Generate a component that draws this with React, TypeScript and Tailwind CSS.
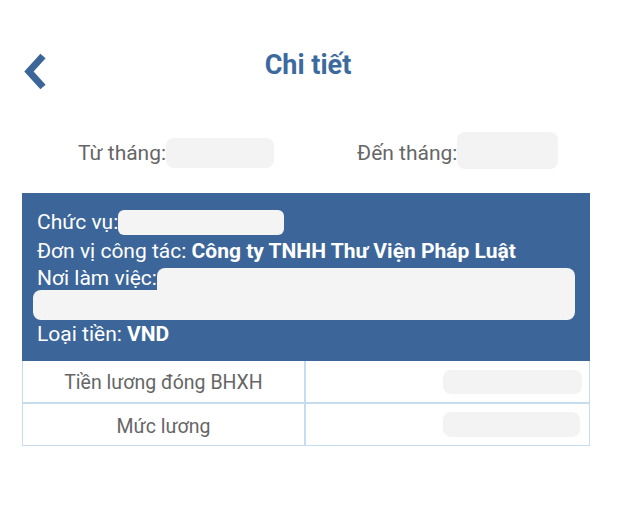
import React from "react";

export default function App() {
  return (
    <div className="w-[620px] h-[529px] bg-white overflow-hidden" style={{ fontFamily: "Roboto, 'Noto Sans', sans-serif" }}>
      <div className="relative h-[110px] flex items-start justify-center pt-[46px]">
        <svg className="absolute left-[20px] top-[51px]" width="34" height="42" viewBox="0 0 34 42">
          <polyline points="23,5 9,20.5 23,36" fill="none" stroke="#3c6699" strokeWidth="7" strokeLinejoin="miter" strokeLinecap="butt" />
        </svg>
        <h1 className="text-[27px] leading-[38px] font-bold text-[#3d6a9e] -ml-[4px]">Chi tiết</h1>
      </div>
      <div className="flex h-[83px] pt-[2px] text-[21px] text-[#666]">
        <div className="flex items-center pl-[78px]">
          <span className="pt-[2px]">Từ tháng:</span>
          <div className="w-[108px] h-[30px] rounded-lg bg-[#f3f3f3] mt-[1px]" />
        </div>
        <div className="flex items-center pl-[83px]">
          <span className="pt-[2px]">Đến tháng:</span>
          <div className="w-[101px] h-[37px] rounded-lg bg-[#f3f3f3] -mt-[4px]" />
        </div>
      </div>
      <div className="mx-[22px] w-[568px]">
        <div className="bg-[#3c6699] text-white text-[21px] leading-[29px] pl-[15px] pr-[15px] pt-[15px] h-[168px]">
          <div className="flex items-center">
            <span>Chức vụ:</span>
            <div className="w-[166px] h-[25px] rounded-md bg-[#f4f4f4]" />
          </div>
          <div>
            Đơn vị công tác: <span className="font-bold">Công ty TNHH Thư Viện Pháp Luật</span>
          </div>
          <div className="flex items-end">
            <span className="leading-[24px]">Nơi làm việc:</span>
            <div className="flex-1 h-[22px] rounded-t-lg bg-[#f4f4f4]" />
          </div>
          <div className="h-[30px] -ml-[4px] rounded-b-lg rounded-tl-lg bg-[#f4f4f4]" />
          <div>
            Loại tiền: <span className="font-bold">VND</span>
          </div>
        </div>
        <div className="border-x border-b border-[#c6ddf0] text-[19.5px] text-[#666]">
          <div className="flex h-[43px] border-b-2 border-[#c6ddf0]">
            <div className="w-[283px] flex items-center justify-center border-r-2 border-[#c6ddf0] pt-[3px]">Tiền lương đóng BHXH</div>
            <div className="flex-1 flex items-center justify-end pr-[7px]">
              <div className="w-[139px] h-[24px] rounded-lg bg-[#f3f3f3]" />
            </div>
          </div>
          <div className="flex h-[41px]">
            <div className="w-[283px] flex items-center justify-center border-r-2 border-[#c6ddf0] pt-[4px]">Mức lương</div>
            <div className="flex-1 flex items-center justify-end pr-[9px]">
              <div className="w-[137px] h-[25px] rounded-lg bg-[#f3f3f3]" />
            </div>
          </div>
        </div>
      </div>
    </div>
  );
}
